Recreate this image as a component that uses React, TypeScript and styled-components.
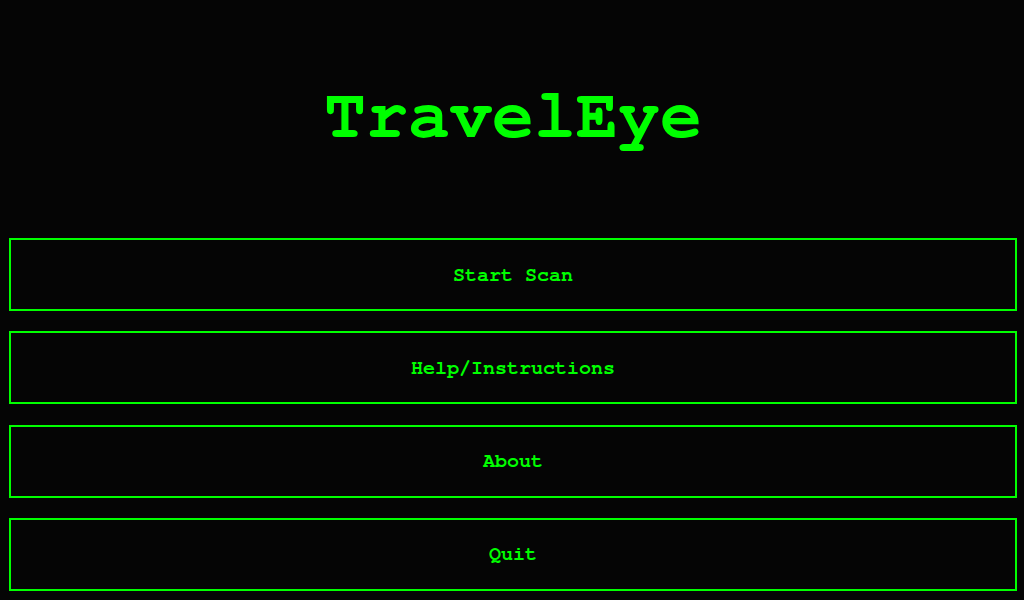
import styled, {createGlobalStyle} from "styled-components";

const Global = createGlobalStyle`
    html, body {
        margin: 0;
        padding: 0;
        background: #050505;
    }
    #root {
        min-height: 600px;
    }
`;

const mono = `FreeMono, "TeX Gyre Cursor", "Courier New", monospace`;

const Screen = styled.div`
        height: 600px;
        display: flex;
        flex-direction: column;
        padding: 0 7px 0 9px;
        box-sizing: border-box;
        background: #050505;
        font-family: ${mono};
        overflow: hidden;
`;

const Title = styled.h1`
        margin: 76px 0 82px;
        height: 80px;
        line-height: 80px;
        text-align: center;
        font-size: 70px;
        font-weight: bold;
        color: #00ff00;
`;

const Menu = styled.nav`
        display: flex;
        flex-direction: column;
        gap: 20.33px;
`;

const MenuButton = styled.button`
        height: 73px;
        width: 100%;
        display: flex;
        align-items: center;
        justify-content: center;
        background: transparent;
        border: 2px solid #00ff00;
        color: #00ff00;
        font-family: ${mono};
        font-size: 20px;
        font-weight: bold;
        cursor: pointer;
        padding: 0;
`;

const items = ["Start Scan", "Help/Instructions", "About", "Quit"];

export default function App() {
    return (
        <>
            <Global/>
            <Screen>
                <Title>TravelEye</Title>
                <Menu>
                    {items.map(label => <MenuButton key={label}>{label}</MenuButton>)}
                </Menu>
            </Screen>
        </>
    );
}
